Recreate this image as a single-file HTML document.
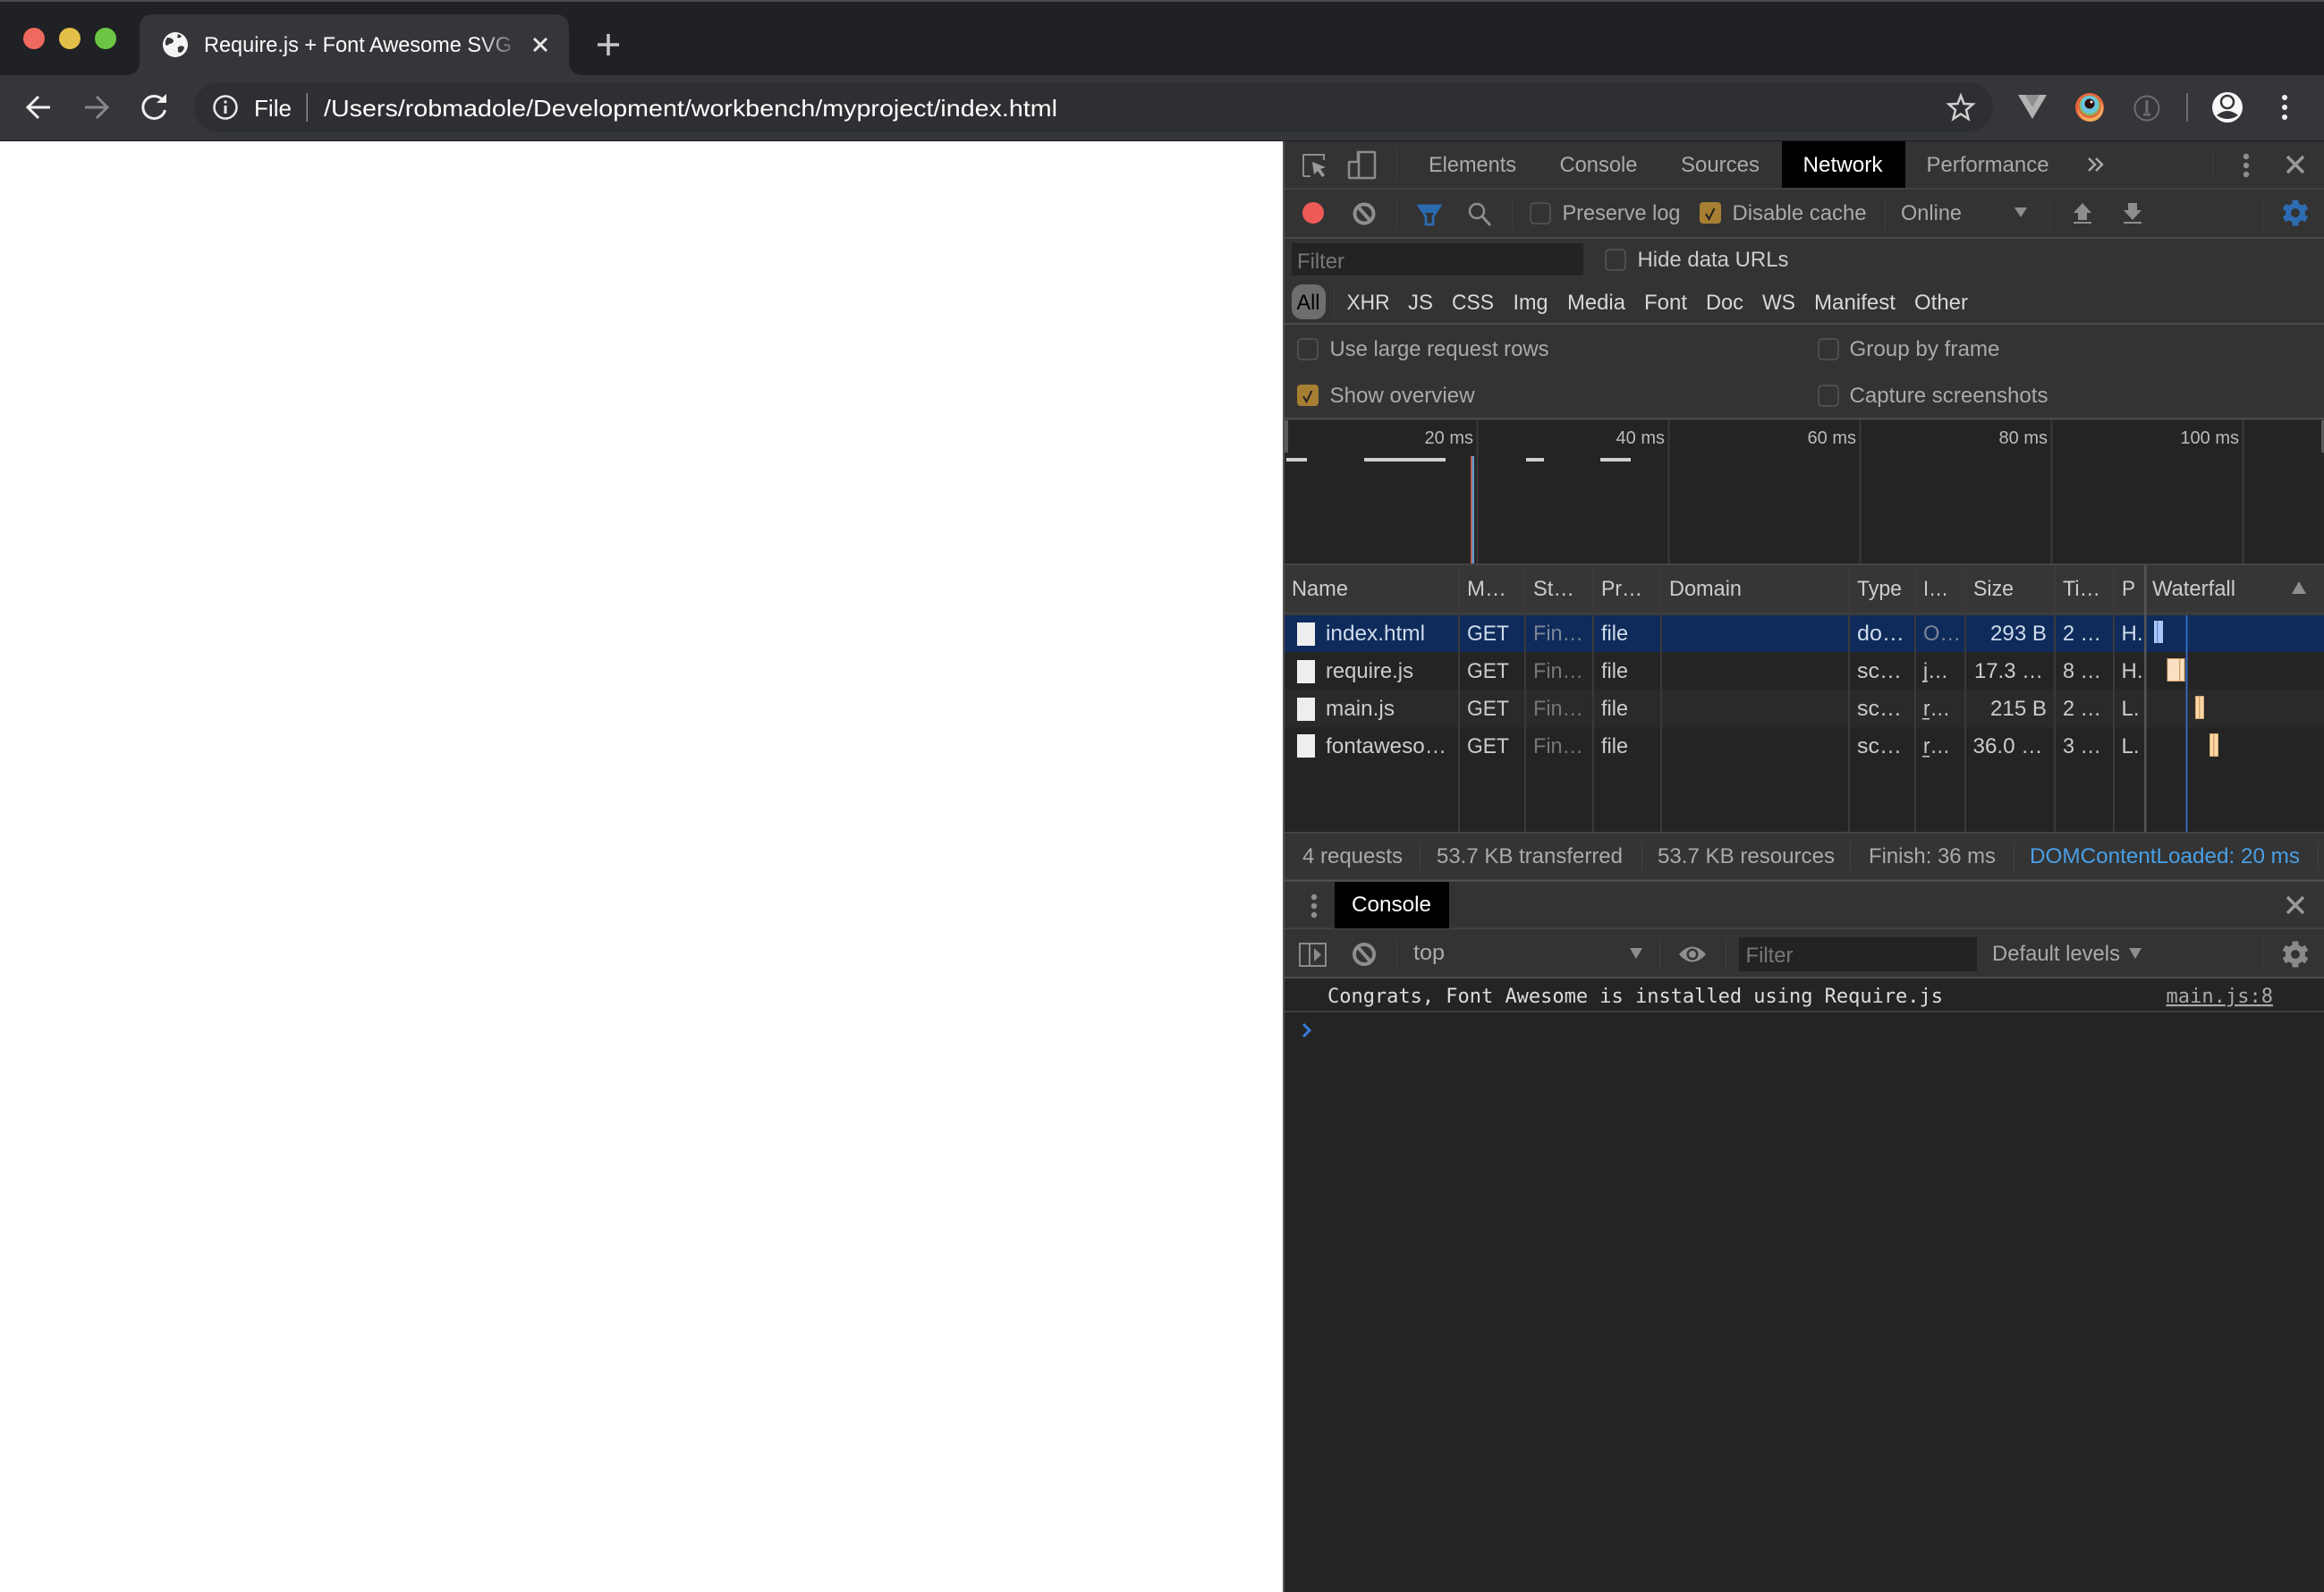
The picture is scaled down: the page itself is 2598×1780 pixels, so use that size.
<!DOCTYPE html>
<html><head><meta charset="utf-8"><title>Require.js + Font Awesome SVG</title>
<style>
html,body{margin:0;padding:0;background:#fff;width:2598px;height:1780px;overflow:hidden}
svg{display:block}
text{font-family:"Liberation Sans",Arial,sans-serif;font-size:24px;fill:#aaa;white-space:pre}
.l{fill:#ccc}.w{fill:#fff}.g{fill:#8a8a8a}.f{fill:#d8d8d8}
.s{fill:#cfdcec}
.m{font-family:"DejaVu Sans Mono","Liberation Mono",monospace;font-size:22px;fill:#ddd}
.o{font-size:20px;fill:#bbb}
</style></head><body>
<svg width="2598" height="1780" viewBox="0 0 2598 1780" xmlns="http://www.w3.org/2000/svg">
<defs>
<linearGradient id="fade" gradientUnits="userSpaceOnUse" x1="535" x2="572" y1="0" y2="0"><stop offset="0" stop-color="#fff"/><stop offset="1" stop-color="#666"/></linearGradient>
</defs>
<rect width="2598" height="1780" fill="#fff"/>
<!-- browser chrome -->
<rect width="2598" height="84" fill="#202124"/>
<rect width="2598" height="2" fill="#4a4b4d"/>
<rect y="84" width="2598" height="74" fill="#35363a"/>
<rect y="157" width="2598" height="1" fill="#1e1e1e"/>
<path d="M140 84q16 0 16-16V32q0-16 16-16H620q16 0 16 16V68q0 16 16 16Z" fill="#35363a"/>
<circle cx="38" cy="43" r="12" fill="#ee6a5f"/><circle cx="78" cy="43" r="12" fill="#e3bf48"/><circle cx="118" cy="43" r="12" fill="#6cc644"/>
<circle cx="196" cy="50" r="14" fill="#f4f4f4"/>
<path d="M187 42q5 0 7 3q0 4-5 4q-1 3-4 1q-1-4 2-8ZM200 52q4-2 6 1q-1 5-5 6q-3-1-2-4q-1-2 1-3ZM199 38q3 1 4 3q-2 2-5 1Z" fill="#35363a"/>
<text x="228" y="58" textLength="344" lengthAdjust="spacingAndGlyphs" style="fill:url(#fade)">Require.js + Font Awesome SVG</text>
<path d="M597 43l14 14M611 43l-14 14" stroke="#e8e8e8" stroke-width="3" fill="none"/>
<path d="M680 38v24M668 50h24" stroke="#c4c6c9" stroke-width="3.5" fill="none"/>
<rect x="217" y="92" width="2011" height="56" rx="28" fill="#2d2f32"/>
<path d="M56 120H32M43 108 31 120 43 132" stroke="#f0f0f0" stroke-width="3" fill="none"/>
<path d="M95 120H119M108 108 120 120 108 132" stroke="#85878a" stroke-width="3" fill="none"/>
<path d="M182 112A12.5 12.5 0 1 0 184.5 123" stroke="#f0f0f0" stroke-width="3" fill="none"/><path d="M175 115H186V105Z" fill="#f0f0f0"/>
<circle cx="252" cy="120" r="12.5" stroke="#e8e8e8" stroke-width="2.5" fill="none"/><rect x="250.5" y="118" width="3" height="9" fill="#e8e8e8"/><rect x="250.5" y="112.5" width="3" height="3" fill="#e8e8e8"/>
<text x="284" y="130" textLength="42" lengthAdjust="spacingAndGlyphs" class="w" style="font-size:26px">File</text>
<rect x="342.500" y="104" width="1.500" height="32" fill="#8a8c8e"/>
<text x="362" y="130" textLength="820" lengthAdjust="spacingAndGlyphs" class="w" style="font-size:26px">/Users/robmadole/Development/workbench/myproject/index.html</text>
<polygon points="2192,107 2195.500,116 2205.500,116.500 2198,123 2200.500,133 2192,127.500 2183.500,133 2186,123 2178.500,116.500 2188.500,116" fill="none" stroke="#cfcfcf" stroke-width="2.500"/>
<polygon points="2256,106 2288,106 2272,133" fill="#b2b2b2"/><polygon points="2264,106 2280,106 2272,120" fill="#8e8e8e"/>
<circle cx="2336" cy="120" r="16" fill="#e4653f"/><circle cx="2337" cy="122" r="14" fill="#f1b45c" opacity=".9"/><circle cx="2336" cy="119" r="13" fill="#e5603e"/><circle cx="2336" cy="118" r="11.500" fill="#8cb75a"/><circle cx="2336" cy="117" r="10" fill="#69c3de"/><circle cx="2336" cy="116" r="5.500" fill="#2a0d08"/><circle cx="2338" cy="114" r="1.500" fill="#fff"/>
<circle cx="2400" cy="121" r="13.500" fill="none" stroke="#6b6c6e" stroke-width="2"/><path d="M2400 112v14M2396 128h8" stroke="#6b6c6e" stroke-width="3" fill="none"/>
<rect x="2444" y="104" width="2" height="32" fill="#6a6b6e"/>
<circle cx="2490" cy="120" r="17" fill="#f8f8f8"/><circle cx="2490" cy="114" r="7" fill="#f8f8f8" stroke="#35363a" stroke-width="2.500"/><path d="M2478 129q12-10 24 0q-12 8-24 0Z" fill="#35363a"/>
<circle cx="2554" cy="109" r="3" fill="#f0f0f0"/><circle cx="2554" cy="120" r="3" fill="#f0f0f0"/><circle cx="2554" cy="131" r="3" fill="#f0f0f0"/>
<!-- devtools -->
<rect x="0" y="158" width="1434" height="2" fill="#fff"/>
<rect x="1434" y="158" width="1164" height="1622" fill="#242424"/>
<rect x="1434" y="158" width="2" height="1622" fill="#555"/>
<rect x="1436" y="158" width="1162" height="312" fill="#333"/>
<rect x="1436" y="210" width="1162" height="2" fill="#414141"/>
<rect x="1436" y="265" width="1162" height="2" fill="#4a4a4a"/>
<rect x="1436" y="361" width="1162" height="2" fill="#4a4a4a"/>
<rect x="1436" y="467" width="1162" height="2.500" fill="#4a4a4a"/>
<!-- top tabs -->
<path d="M1457 192v-18a1 1 0 0 1 1-1h22v6M1457 192v4a1 1 0 0 0 1 1h7" stroke="#8c8c8c" stroke-width="2" fill="none"/><path d="M1467 181l15 6-6 2 5 7-3 2-5-7-4 4Z" fill="#9a9a9a"/>
<path d="M1518 170h18a1 1 0 0 1 1 1v27a1 1 0 0 1-1 1h-27a1 1 0 0 1-1-1v-16a1 1 0 0 1 1-1h9Z" fill="none" stroke="#8c8c8c" stroke-width="2.500"/><path d="M1519 170v29" stroke="#8c8c8c" stroke-width="2.500"/>
<rect x="1561" y="165" width="1" height="36" fill="#3f3f3f"/>
<text x="1597" y="192" textLength="98" lengthAdjust="spacingAndGlyphs">Elements</text>
<text x="1743.500" y="192" textLength="87" lengthAdjust="spacingAndGlyphs">Console</text>
<text x="1879" y="192" textLength="88" lengthAdjust="spacingAndGlyphs">Sources</text>
<rect x="1992" y="158" width="138" height="52" fill="#000"/>
<text x="2015.500" y="192" textLength="89" lengthAdjust="spacingAndGlyphs" class="w">Network</text>
<text x="2153.500" y="192" textLength="137" lengthAdjust="spacingAndGlyphs">Performance</text>
<path d="M2335 177l7 7-7 7M2343 177l7 7-7 7" stroke="#aaa" stroke-width="2.500" fill="none"/>
<rect x="2473" y="168" width="1" height="32" fill="#3f3f3f"/>
<circle cx="2511" cy="175" r="3.200" fill="#8e8e8e"/><circle cx="2511" cy="185" r="3.200" fill="#8e8e8e"/><circle cx="2511" cy="195" r="3.200" fill="#8e8e8e"/>
<path d="M2557 175l18 18M2575 175l-18 18" stroke="#9a9a9a" stroke-width="3.500" fill="none"/>
<!-- network toolbar -->
<circle cx="1468" cy="238" r="12" fill="#ee5a55"/>
<circle cx="1525" cy="239" r="10.500" fill="none" stroke="#8e8e8e" stroke-width="4"/><path d="M1518 231l14 16" stroke="#8e8e8e" stroke-width="4"/>
<rect x="1561" y="222" width="1" height="34" fill="#3f3f3f"/>
<path d="M1586 230h24l-8 12v9h-8v-9Z" fill="none" stroke="#2a6ab0" stroke-width="2.800"/><path d="M1586 230h24l-6 8h-12Z" fill="#2a6ab0"/>
<circle cx="1651" cy="236" r="8" fill="none" stroke="#8e8e8e" stroke-width="2.500"/><path d="M1657 242l9 10" stroke="#8e8e8e" stroke-width="3"/>
<rect x="1690" y="222" width="1" height="34" fill="#3f3f3f"/>
<rect x="1711" y="227" width="22" height="23" rx="4" fill="#333" stroke="#565656" stroke-width="1.500"/>
<text x="1746.500" y="246" textLength="132" lengthAdjust="spacingAndGlyphs">Preserve log</text>
<rect x="1900" y="226" width="24" height="24" rx="4" fill="#a67f33"/><path d="M1907 239l3.500 6 6-12" stroke="#222" stroke-width="2" fill="none"/>
<text x="1936.500" y="246" textLength="150" lengthAdjust="spacingAndGlyphs">Disable cache</text>
<rect x="2107" y="222" width="1" height="34" fill="#3f3f3f"/>
<text x="2125" y="246" textLength="68" lengthAdjust="spacingAndGlyphs">Online</text>
<polygon points="2252,232 2266,232 2259,243" fill="#8e8e8e"/>
<rect x="2291" y="222" width="1" height="34" fill="#3f3f3f"/>
<path d="M2328 227l10 11h-5v8h-10v-8h-5Z" fill="#8e8e8e"/><rect x="2318" y="248" width="20" height="2" fill="#8e8e8e"/>
<path d="M2379 227h10v8h5l-10 11-10-11h5Z" fill="#8e8e8e"/><rect x="2374" y="248" width="20" height="2" fill="#8e8e8e"/>
<rect x="2529" y="222" width="1" height="34" fill="#3f3f3f"/>
<g transform="translate(2566 238)" fill="#2d6cb2"><circle r="11"/><rect x="-3.500" y="-14.500" width="7" height="29" rx="1"/><rect x="-3.500" y="-14.500" width="7" height="29" rx="1" transform="rotate(60)"/><rect x="-3.500" y="-14.500" width="7" height="29" rx="1" transform="rotate(120)"/><circle r="5" fill="#333"/></g>
<!-- filter row -->
<rect x="1444" y="272" width="326" height="36" fill="#232323"/>
<text x="1450" y="300" textLength="53" lengthAdjust="spacingAndGlyphs" fill="#777" style="fill:#777">Filter</text>
<rect x="1795" y="279" width="22" height="23" rx="4" fill="#333" stroke="#565656" stroke-width="1.500"/>
<text x="1830.500" y="298" textLength="169" lengthAdjust="spacingAndGlyphs" class="l">Hide data URLs</text>
<rect x="1444" y="318" width="38" height="39" rx="12" fill="#6e6e6e"/>
<text x="1449.500" y="346" textLength="26" lengthAdjust="spacingAndGlyphs" style="fill:#000">All</text>
<rect x="1491" y="322" width="1" height="32" fill="#3f3f3f"/>
<text x="1505.500" y="346" textLength="48" lengthAdjust="spacingAndGlyphs" class="f">XHR</text>
<text x="1574" y="346" textLength="28" lengthAdjust="spacingAndGlyphs" class="f">JS</text>
<text x="1623" y="346" textLength="47" lengthAdjust="spacingAndGlyphs" class="f">CSS</text>
<text x="1691.500" y="346" textLength="39" lengthAdjust="spacingAndGlyphs" class="f">Img</text>
<text x="1752" y="346" textLength="65" lengthAdjust="spacingAndGlyphs" class="f">Media</text>
<text x="1838" y="346" textLength="48" lengthAdjust="spacingAndGlyphs" class="f">Font</text>
<text x="1907" y="346" textLength="42" lengthAdjust="spacingAndGlyphs" class="f">Doc</text>
<text x="1970" y="346" textLength="37" lengthAdjust="spacingAndGlyphs" class="f">WS</text>
<text x="2028" y="346" textLength="91" lengthAdjust="spacingAndGlyphs" class="f">Manifest</text>
<text x="2140" y="346" textLength="60" lengthAdjust="spacingAndGlyphs" class="f">Other</text>
<!-- options -->
<rect x="1451" y="379" width="22" height="23" rx="4" fill="#333" stroke="#565656" stroke-width="1.500"/>
<text x="1486.500" y="398" textLength="245" lengthAdjust="spacingAndGlyphs">Use large request rows</text>
<rect x="1450" y="430" width="24" height="24" rx="4" fill="#a67f33"/><path d="M1457 443l3.500 6 6-12" stroke="#222" stroke-width="2" fill="none"/>
<text x="1486.500" y="450" textLength="162" lengthAdjust="spacingAndGlyphs">Show overview</text>
<rect x="2033" y="379" width="22" height="23" rx="4" fill="#333" stroke="#565656" stroke-width="1.500"/>
<text x="2067.500" y="398" textLength="168" lengthAdjust="spacingAndGlyphs">Group by frame</text>
<rect x="2033" y="431" width="22" height="23" rx="4" fill="#333" stroke="#565656" stroke-width="1.500"/>
<text x="2067.500" y="450" textLength="222" lengthAdjust="spacingAndGlyphs">Capture screenshots</text>
<!-- overview -->
<rect x="1436" y="469.500" width="1162" height="161" fill="#242424"/>
<rect x="1436" y="470" width="4" height="36" fill="#5a5a5a"/>
<rect x="2595" y="470" width="3" height="36" fill="#5a5a5a"/>
<rect x="1650.500" y="470" width="2" height="160" fill="#3a3a3a"/>
<rect x="1864.500" y="470" width="2" height="160" fill="#3a3a3a"/>
<rect x="2078.500" y="470" width="2" height="160" fill="#3a3a3a"/>
<rect x="2292.500" y="470" width="2" height="160" fill="#3a3a3a"/>
<rect x="2506.500" y="470" width="2" height="160" fill="#3a3a3a"/>
<text x="1647" y="496" text-anchor="end" class="o">20 ms</text>
<text x="1861" y="496" text-anchor="end" class="o">40 ms</text>
<text x="2075" y="496" text-anchor="end" class="o">60 ms</text>
<text x="2289" y="496" text-anchor="end" class="o">80 ms</text>
<text x="2503" y="496" text-anchor="end" class="o">100 ms</text>
<rect x="1438" y="512" width="23" height="4" fill="#cfcfcf"/>
<rect x="1525" y="512" width="91" height="4" fill="#cfcfcf"/>
<rect x="1706" y="512" width="20" height="4" fill="#cfcfcf"/>
<rect x="1789" y="512" width="34" height="4" fill="#cfcfcf"/>
<rect x="1644" y="510" width="2" height="120" fill="#c0625a"/><rect x="1646" y="510" width="2" height="120" fill="#5a9fd8"/>
<!-- table header -->
<rect x="1436" y="630" width="1162" height="56" fill="#363636"/>
<rect x="1436" y="630" width="1162" height="2" fill="#444"/>
<rect x="1436" y="684" width="1162" height="4" fill="#3c3c3c"/>
<!-- rows -->
<rect x="1436" y="688" width="1162" height="41" fill="#0f2b5b"/>
<rect x="1436" y="729" width="1162" height="42" fill="#242424"/>
<rect x="1436" y="771" width="1162" height="42" fill="#2a2a2a"/>
<rect x="1436" y="813" width="1162" height="42" fill="#242424"/>
<!-- column separators -->
<g fill="#3a3a3a">
<rect x="1630" y="632" width="2" height="298"/><rect x="1704" y="632" width="2" height="298"/><rect x="1780" y="632" width="2" height="298"/><rect x="1856" y="632" width="2" height="298"/><rect x="2066" y="632" width="2" height="298"/><rect x="2140" y="632" width="2" height="298"/><rect x="2196" y="632" width="2" height="298"/><rect x="2296" y="632" width="2" height="298"/><rect x="2362" y="632" width="2" height="298"/>
</g>
<rect x="2397" y="632" width="2.500" height="298" fill="#555"/>
<text x="1444" y="666" textLength="63" lengthAdjust="spacingAndGlyphs" class="l">Name</text>
<text x="1640" y="666" textLength="44" lengthAdjust="spacingAndGlyphs" class="l">M…</text>
<text x="1714" y="666" textLength="46" lengthAdjust="spacingAndGlyphs" class="l">St…</text>
<text x="1790" y="666" textLength="46" lengthAdjust="spacingAndGlyphs" class="l">Pr…</text>
<text x="1866" y="666" textLength="81" lengthAdjust="spacingAndGlyphs" class="l">Domain</text>
<text x="2076" y="666" textLength="50" lengthAdjust="spacingAndGlyphs" class="l">Type</text>
<text x="2150" y="666" textLength="28" lengthAdjust="spacingAndGlyphs" class="l">I…</text>
<text x="2206" y="666" textLength="45" lengthAdjust="spacingAndGlyphs" class="l">Size</text>
<text x="2306" y="666" textLength="42" lengthAdjust="spacingAndGlyphs" class="l">Ti…</text>
<text x="2372" y="666" textLength="15" lengthAdjust="spacingAndGlyphs" class="l">P</text>
<text x="2406" y="666" textLength="93" lengthAdjust="spacingAndGlyphs" class="l">Waterfall</text>
<polygon points="2570,650 2578,664 2562,664" fill="#8e8e8e"/>
<!-- doc icons -->
<g fill="#eee"><rect x="1450" y="696" width="20" height="26"/><rect x="1450" y="738" width="20" height="26"/><rect x="1450" y="780" width="20" height="26"/><rect x="1450" y="821" width="20" height="26"/></g>
<!-- row 1 -->
<text x="1482" y="716" textLength="111" lengthAdjust="spacingAndGlyphs" class="s">index.html</text>
<text x="1640" y="716" textLength="47" lengthAdjust="spacingAndGlyphs" class="s">GET</text>
<text x="1714" y="716" textLength="56" lengthAdjust="spacingAndGlyphs" style="fill:#7c8697">Fin…</text>
<text x="1790" y="716" textLength="30" lengthAdjust="spacingAndGlyphs" class="s">file</text>
<text x="2076" y="716" textLength="53" lengthAdjust="spacingAndGlyphs" class="s">do…</text>
<text x="2150" y="716" textLength="42" lengthAdjust="spacingAndGlyphs" style="fill:#7c8697">O…</text>
<text x="2225" y="716" textLength="63" lengthAdjust="spacingAndGlyphs" class="s">293 B</text>
<text x="2306" y="716" textLength="43" lengthAdjust="spacingAndGlyphs" class="s">2 …</text>
<text x="2371.500" y="716" textLength="24" lengthAdjust="spacingAndGlyphs" class="s">H.</text>
<!-- row 2 -->
<text x="1482" y="758" textLength="98" lengthAdjust="spacingAndGlyphs" class="l">require.js</text>
<text x="1640" y="758" textLength="47" lengthAdjust="spacingAndGlyphs" class="l">GET</text>
<text x="1714" y="758" textLength="56" lengthAdjust="spacingAndGlyphs" style="fill:#777">Fin…</text>
<text x="1790" y="758" textLength="30" lengthAdjust="spacingAndGlyphs" class="l">file</text>
<text x="2076" y="758" textLength="50" lengthAdjust="spacingAndGlyphs" class="l">sc…</text>
<text x="2150" y="758" textLength="28" lengthAdjust="spacingAndGlyphs" class="l">j…</text><rect x="2149" y="761" width="6" height="1.500" fill="#ccc"/>
<text x="2207" y="758" textLength="77" lengthAdjust="spacingAndGlyphs" class="l">17.3 …</text>
<text x="2306" y="758" textLength="43" lengthAdjust="spacingAndGlyphs" class="l">8 …</text>
<text x="2371.500" y="758" textLength="24" lengthAdjust="spacingAndGlyphs" class="l">H.</text>
<!-- row 3 -->
<text x="1482" y="800" textLength="77" lengthAdjust="spacingAndGlyphs" class="l">main.js</text>
<text x="1640" y="800" textLength="47" lengthAdjust="spacingAndGlyphs" class="l">GET</text>
<text x="1714" y="800" textLength="56" lengthAdjust="spacingAndGlyphs" style="fill:#777">Fin…</text>
<text x="1790" y="800" textLength="30" lengthAdjust="spacingAndGlyphs" class="l">file</text>
<text x="2076" y="800" textLength="50" lengthAdjust="spacingAndGlyphs" class="l">sc…</text>
<text x="2150" y="800" textLength="30" lengthAdjust="spacingAndGlyphs" class="l">r…</text><rect x="2149" y="803" width="8" height="1.500" fill="#ccc"/>
<text x="2225" y="800" textLength="63" lengthAdjust="spacingAndGlyphs" class="l">215 B</text>
<text x="2306" y="800" textLength="43" lengthAdjust="spacingAndGlyphs" class="l">2 …</text>
<text x="2371.500" y="800" textLength="20" lengthAdjust="spacingAndGlyphs" class="l">L.</text>
<!-- row 4 -->
<text x="1482" y="842" textLength="135" lengthAdjust="spacingAndGlyphs" class="l">fontaweso…</text>
<text x="1640" y="842" textLength="47" lengthAdjust="spacingAndGlyphs" class="l">GET</text>
<text x="1714" y="842" textLength="56" lengthAdjust="spacingAndGlyphs" style="fill:#777">Fin…</text>
<text x="1790" y="842" textLength="30" lengthAdjust="spacingAndGlyphs" class="l">file</text>
<text x="2076" y="842" textLength="50" lengthAdjust="spacingAndGlyphs" class="l">sc…</text>
<text x="2150" y="842" textLength="30" lengthAdjust="spacingAndGlyphs" class="l">r…</text><rect x="2149" y="845" width="8" height="1.500" fill="#ccc"/>
<text x="2205.500" y="842" textLength="78" lengthAdjust="spacingAndGlyphs" class="l">36.0 …</text>
<text x="2306" y="842" textLength="43" lengthAdjust="spacingAndGlyphs" class="l">3 …</text>
<text x="2371.500" y="842" textLength="20" lengthAdjust="spacingAndGlyphs" class="l">L.</text>
<!-- waterfall -->
<rect x="2408" y="694" width="10" height="25" fill="#a9c7f7"/><rect x="2411" y="694" width="1.500" height="25" fill="#6f95d8"/>
<rect x="2423" y="736.500" width="19" height="25" fill="#fbe1c3" stroke="#d4a56c" stroke-width="1"/><rect x="2436" y="736" width="1.500" height="26" fill="#d4a56c"/>
<rect x="2454.500" y="778.500" width="9" height="25" fill="#fdd8a8" stroke="#d4a56c" stroke-width="1"/><rect x="2458" y="778" width="1.500" height="26" fill="#d4a56c"/>
<rect x="2470.500" y="820.500" width="9" height="25" fill="#fdd8a8" stroke="#d4a56c" stroke-width="1"/><rect x="2474" y="820" width="1.500" height="26" fill="#d4a56c"/>
<rect x="2443.500" y="688" width="2" height="242" fill="#3367c0"/>
<!-- status bar -->
<rect x="1436" y="930" width="1162" height="55" fill="#343434"/>
<rect x="1436" y="930" width="1162" height="2" fill="#444"/>
<rect x="1436" y="983.500" width="1162" height="2" fill="#555"/>
<text x="1456" y="965" textLength="112" lengthAdjust="spacingAndGlyphs">4 requests</text>
<rect x="1587" y="942" width="1" height="32" fill="#414141"/>
<text x="1606" y="965" textLength="208" lengthAdjust="spacingAndGlyphs">53.7 KB transferred</text>
<rect x="1835" y="942" width="1" height="32" fill="#414141"/>
<text x="1853" y="965" textLength="198" lengthAdjust="spacingAndGlyphs">53.7 KB resources</text>
<rect x="2068" y="942" width="1" height="32" fill="#414141"/>
<text x="2089" y="965" textLength="142" lengthAdjust="spacingAndGlyphs">Finish: 36 ms</text>
<rect x="2251" y="942" width="1" height="32" fill="#414141"/>
<text x="2269" y="965" textLength="302" lengthAdjust="spacingAndGlyphs" style="fill:#4a9fe5">DOMContentLoaded: 20 ms</text>
<rect x="2591" y="942" width="1" height="32" fill="#414141"/>
<!-- drawer -->
<rect x="1436" y="985.500" width="1162" height="52" fill="#333"/>
<rect x="1436" y="1037" width="1162" height="2" fill="#414141"/>
<circle cx="1469" cy="1003" r="3.200" fill="#8e8e8e"/><circle cx="1469" cy="1013" r="3.200" fill="#8e8e8e"/><circle cx="1469" cy="1023" r="3.200" fill="#8e8e8e"/>
<rect x="1492" y="986" width="128" height="52" fill="#000"/>
<text x="1511" y="1019" textLength="89" lengthAdjust="spacingAndGlyphs" class="w">Console</text>
<path d="M2557 1003l18 18M2575 1003l-18 18" stroke="#9a9a9a" stroke-width="3.500" fill="none"/>
<rect x="1436" y="1039" width="1162" height="53" fill="#333"/>
<rect x="1436" y="1092" width="1162" height="2" fill="#4e4e4e"/>
<rect x="1453" y="1055" width="29" height="25" fill="none" stroke="#8a8a8a" stroke-width="2"/><rect x="1463" y="1055" width="2" height="25" fill="#8a8a8a"/><polygon points="1469,1060 1477,1067.500 1469,1075" fill="#8a8a8a"/>
<circle cx="1525" cy="1067" r="11" fill="none" stroke="#8e8e8e" stroke-width="4"/><path d="M1518 1059l14 16" stroke="#8e8e8e" stroke-width="4"/>
<rect x="1561" y="1050" width="1" height="34" fill="#3f3f3f"/>
<text x="1580" y="1073" textLength="35" lengthAdjust="spacingAndGlyphs">top</text>
<polygon points="1822,1060 1836,1060 1829,1072" fill="#8e8e8e"/>
<rect x="1855" y="1050" width="1" height="34" fill="#3f3f3f"/>
<path d="M1877 1067q15-17 30 0q-15 17-30 0Z" fill="#8e8e8e"/><circle cx="1892" cy="1067" r="6.500" fill="#333"/><circle cx="1892" cy="1067" r="4" fill="#8e8e8e"/>
<rect x="1929" y="1050" width="1" height="34" fill="#3f3f3f"/>
<rect x="1944" y="1048" width="266" height="38" fill="#232323"/>
<text x="1951.500" y="1076" textLength="53" lengthAdjust="spacingAndGlyphs" style="fill:#777">Filter</text>
<text x="2227" y="1074" textLength="143" lengthAdjust="spacingAndGlyphs">Default levels</text>
<polygon points="2380,1060 2394,1060 2387,1072" fill="#8e8e8e"/>
<rect x="2529" y="1050" width="1" height="34" fill="#3f3f3f"/>
<g transform="translate(2566 1067)" fill="#8a8a8a"><circle r="11"/><rect x="-3.500" y="-14.500" width="7" height="29" rx="1"/><rect x="-3.500" y="-14.500" width="7" height="29" rx="1" transform="rotate(60)"/><rect x="-3.500" y="-14.500" width="7" height="29" rx="1" transform="rotate(120)"/><circle r="5" fill="#333"/></g>
<!-- console -->
<text x="1484" y="1121" textLength="688" class="m">Congrats, Font Awesome is installed using Require.js</text>
<text x="2421.500" y="1121" textLength="119.500" class="m" style="fill:#aaa" text-decoration="underline">main.js:8</text>
<rect x="1436" y="1130" width="1162" height="2" fill="#3c3c3c"/>
<path d="M1457 1145l7 7-7 7" stroke="#3b7ce0" stroke-width="3" fill="none"/>
</svg>
</body></html>
